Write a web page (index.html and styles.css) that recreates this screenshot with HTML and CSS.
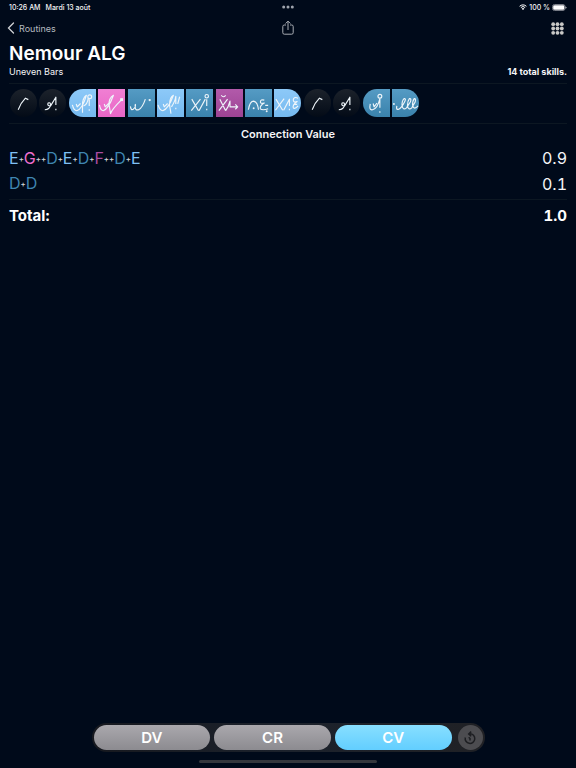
FILE: index.html
```html
<!DOCTYPE html>
<html lang="en">
<head>
    <meta charset="UTF-8">
    <meta name="viewport" content="width=device-width, initial-scale=1.0">
    <title>Nemour ALG</title>
    <link rel="stylesheet" href="styles.css">
</head>
<body>
    <div class="status-bar">
        <div class="status-left">
            <span>10:26 AM</span>
            <span>Mardi 13 août</span>
        </div>
        <svg class="dots" viewBox="0 0 12 4"><circle cx="1.7" cy="2" r="1.5"/><circle cx="6" cy="2" r="1.5"/><circle cx="10.3" cy="2" r="1.5"/></svg>
        <div class="status-right">
            <svg class="wifi" viewBox="0 0 16 12"><path d="M1.2 4.6a9.6 9.6 0 0 1 13.6 0M3.7 7.1a6.1 6.1 0 0 1 8.6 0"/><path class="fill" d="M8 12 5.3 9.3a3.8 3.8 0 0 1 5.4 0z"/></svg>
            <span>100 %</span>
            <svg class="battery" viewBox="0 0 15 7"><rect class="shell" x=".5" y=".5" width="12.5" height="6" rx="2"/><rect x="1.2" y="1.2" width="11.1" height="4.6" rx="1.3"/><path d="M13.6 2.4v2.2q.9-.3.9-1.1t-.9-1.1z"/></svg>
        </div>
    </div>

    <nav class="nav-bar">
        <a class="back" href="#">
            <svg viewBox="0 0 8 12"><path d="M6.5 1 1.5 6l5 5"/></svg>
            Routines
        </a>
        <button class="share" aria-label="Share">
            <svg viewBox="0 0 12 16"><path d="M4 5H2.3Q.8 5 .8 6.5v6.2q0 1.5 1.5 1.5h7.4q1.5 0 1.5-1.5V6.5Q11.2 5 9.7 5H8M6 10V1.2M3.6 3.5 6 1.1l2.4 2.4"/></svg>
        </button>
        <button class="grid-button" aria-label="Grid">
            <svg viewBox="0 0 13 13">
                <circle cx="2.2" cy="2.2" r="1.9"/><circle cx="6.5" cy="2.2" r="1.9"/><circle cx="10.8" cy="2.2" r="1.9"/>
                <circle cx="2.2" cy="6.5" r="1.9"/><circle cx="6.5" cy="6.5" r="1.9"/><circle cx="10.8" cy="6.5" r="1.9"/>
                <circle cx="2.2" cy="10.8" r="1.9"/><circle cx="6.5" cy="10.8" r="1.9"/><circle cx="10.8" cy="10.8" r="1.9"/>
            </svg>
        </button>
    </nav>

    <main>
        <h1>Nemour ALG</h1>
        <div class="subtitle">
            <span>Uneven Bars</span>
            <strong>14 total skills.</strong>
        </div>

        <div class="skills">
            <svg class="skill none" viewBox="0 0 28 28"><path d="M8.5 21Q11 14 16 9L19 10.5"/></svg>
            <svg class="skill none" viewBox="0 0 28 28"><path d="M6 21Q11 21 12 16Q12 13 9.5 14Q8 17 12 17L17.5 8V16M17.5 20v1.5"/></svg>
            <svg class="skill level-e start" viewBox="0 0 28 28"><path d="M3.5 16Q5 22 8 22Q14 20 18 6Q14 9 14 16L14 24M7.5 15L8.5 18L12 14.5M15 17Q19 16 20 9M21 10V17M21 20.5v1.5"/><circle cx="21.5" cy="7.5" r="2"/></svg>
            <svg class="skill level-g" viewBox="0 0 28 28"><path d="M1.5 16Q2.5 22 5.5 22Q11 20 16 6Q11 9 11.5 16L13 25Q14 21 24.5 10.5M6.5 15L7.5 18L11 14.5"/><rect class="dot" x="23" y="9" width="3" height="3"/></svg>
            <svg class="skill level-d" viewBox="0 0 28 28"><path d="M2.5 17.5Q3 22 5.5 20.5Q8.5 18 7.5 15M7.5 17Q7 22 11 21Q15 19 18 10"/><circle class="dot" cx="22.5" cy="11" r="1.2"/></svg>
            <svg class="skill level-e" viewBox="0 0 28 28"><path d="M1 16Q3 22 6 22Q12 20 17 6Q13 8 13 16L14.5 25M6.5 15L7.5 18L11 14.5M15 18Q19 12 19.5 7V15M19.5 19v1.5M23.5 7.5L21.5 15"/></svg>
            <svg class="skill level-d" viewBox="0 0 28 28"><path d="M6 10L13 22M15 10L5.5 22M13.5 22L20 10M21.5 10V17M21.5 20v1.5"/><circle cx="21.5" cy="7" r="1.8"/></svg>
            <svg class="skill level-f" viewBox="0 0 28 28"><path d="M4 10L10 22M12 10L3 22M5.5 6Q7.5 9 10 6M10 22Q13 18 14.5 12V18H22.5M20 15.5L22.5 18L20 20.5"/></svg>
            <svg class="skill level-d" viewBox="0 0 28 28"><path d="M3.5 21Q5 12 9 12Q13 13 14 21M20 11Q16 10 16 13Q16 15 20 14Q15 17 16 20Q18 22 24 20M21 16.5h3"/><circle class="dot" cx="9" cy="19.5" r="1"/><circle class="dot" cx="22.5" cy="22.5" r="1"/></svg>
            <svg class="skill level-e end" viewBox="0 0 28 28"><path d="M2 10L9 21.5M10.5 9.5L1.5 21.5M10 21.5L16 10V17M16 20v1.5M25 9Q20 7 20 11Q20 14 24 12.5Q19 16 20 19Q21 21 25 17M21 15.5h3"/></svg>
            <svg class="skill none" viewBox="0 0 28 28"><path d="M8.5 21Q11 14 16 9L19 10.5"/></svg>
            <svg class="skill none" viewBox="0 0 28 28"><path d="M6 21Q11 21 12 16Q12 13 9.5 14Q8 17 12 17L17.5 8V16M17.5 20v1.5"/></svg>
            <svg class="skill level-d start" viewBox="0 0 28 28"><path d="M7.5 15Q6 22 10 21Q15 20 17.5 9.5V19M17.5 22.5v1.5M10.5 14.5L11.5 18L14.5 14"/><circle cx="17.5" cy="7" r="2"/></svg>
            <svg class="skill level-d end" viewBox="0 0 28 28"><path d="M5 17Q4 21.5 7 20.5Q10 19 13 13Q15 9 12.5 9.5Q10 12 10.5 17Q11.5 22 15 19L19 13Q20.5 9 18 9.5Q16 12 16 17Q17 22 20.5 19L24 13Q25 9 23 9.5Q21 12 21.5 17Q23 21.5 27 17"/><circle class="dot" cx="2" cy="15" r="1"/></svg>
        </div>

        <h2>Connection Value</h2>
        <table class="connections">
            <tbody>
                <tr>
                    <td><span class="e">E</span><i>+</i><span class="g">G</span><i>++</i><span class="d">D</span><i>+</i><span class="e">E</span><i>+</i><span class="d">D</span><i>+</i><span class="f">F</span><i>++</i><span class="d">D</span><i>+</i><span class="e">E</span></td>
                    <td>0.9</td>
                </tr>
                <tr>
                    <td><span class="d">D</span><i>+</i><span class="d">D</span></td>
                    <td>0.1</td>
                </tr>
            </tbody>
            <tfoot>
                <tr>
                    <th scope="row">Total:</th>
                    <td>1.0</td>
                </tr>
            </tfoot>
        </table>
    </main>

    <footer>
        <div class="tabs">
            <button class="tab">DV</button>
            <button class="tab">CR</button>
            <button class="tab active">CV</button>
            <button class="reset" aria-label="Reset">
                <svg viewBox="0 0 14 14"><path d="M2.3 6.5A4.8 4.8 0 1 0 7 2.8M8.2.6 5.7 2.9 8.2 5.2M5.7 6.2 7 7.5V9.5"/></svg>
            </button>
        </div>
        <div class="home-indicator"></div>
    </footer>
</body>
</html>
```
FILE: styles.css
```css
* {
    box-sizing: border-box;
}

body {
    margin: 0;
    min-height: 100vh;
    display: flex;
    flex-direction: column;
    background: #000a1a;
    color: #f5f5f7;
    font-family: Inter, "Liberation Sans", sans-serif;
    font-size: 9px;
}

button {
    padding: 0;
    border: none;
    background: none;
    color: inherit;
    font-family: inherit;
    cursor: pointer;
}

svg {
    display: block;
}

/* Status bar */
.status-bar,
.nav-bar {
    display: grid;
    grid-template-columns: 1fr auto 1fr;
    align-items: center;
}

.status-bar {
    height: 14px;
    padding: 0 9px;
    font-size: 7px;
    font-weight: 500;
}

.status-left,
.status-right {
    display: flex;
    align-items: center;
}

.status-left {
    gap: 5px;
}

.status-right {
    justify-content: flex-end;
    gap: 2px;
}

.dots {
    width: 12px;
    height: 4px;
    fill: #a0a5ae;
}

.wifi {
    width: 8px;
    height: 6px;
    fill: none;
    stroke: #fff;
    stroke-width: 2;
}

.wifi .fill {
    fill: #fff;
    stroke: none;
}

.battery {
    width: 15px;
    height: 7px;
    fill: #fff;
}

.battery .shell {
    fill: none;
    stroke: #777c86;
}

/* Navigation */
.nav-bar {
    height: 28px;
    padding: 0 7px;
    color: #b6bac0;
}

.back {
    display: flex;
    align-items: center;
    gap: 4px;
    justify-self: start;
    color: inherit;
    text-decoration: none;
}

.back svg {
    width: 8px;
    height: 12px;
    fill: none;
    stroke: #d0d3d7;
    stroke-width: 1.3;
    stroke-linecap: round;
}

.share svg {
    width: 12px;
    height: 16px;
    fill: none;
    stroke: #a9adb4;
    stroke-width: 1;
}

.grid-button {
    justify-self: end;
    margin-right: 5px;
}

.grid-button svg {
    width: 13px;
    height: 13px;
    fill: #c9c9c7;
}

/* Content */
main {
    flex: 1;
    padding: 0 9px;
}

h1 {
    margin: 0;
    color: #fff;
    font-size: 19px;
    font-weight: 600;
    line-height: 24px;
}

.subtitle {
    display: flex;
    justify-content: space-between;
    padding-bottom: 5px;
    border-bottom: 1px solid #0c1722;
    line-height: 12px;
}

.subtitle strong {
    font-weight: 700;
}

.skills {
    display: grid;
    grid-template-columns: repeat(14, minmax(0, 27px));
    justify-content: space-between;
    max-width: 410px;
    padding: 5px 0 6px 1px;
}

.skill {
    width: 100%;
    height: 28px;
    fill: none;
    stroke: #eef5fa;
    stroke-width: 1.2;
    stroke-linejoin: round;
}

.skill .dot {
    fill: #eef5fa;
    stroke: none;
}

.none {
    border-radius: 14px;
    background: linear-gradient(#1c222b, #030b17);
}

.level-d {
    background: linear-gradient(#559bc4, #3a82ac);
}

.level-e {
    background: linear-gradient(#8dc9f8, #75b9ef);
}

.level-f {
    background: linear-gradient(#b25aaa, #9c4393);
}

.level-g {
    background: linear-gradient(#f07fd3, #e966c6);
}

.start {
    border-radius: 14px 0 0 14px;
}

.end {
    border-radius: 0 14px 14px 0;
}

h2 {
    margin: 0;
    padding-top: 3px;
    border-top: 1px solid #0c1722;
    font-size: 11px;
    font-weight: 600;
    line-height: 14px;
    text-align: center;
}

.connections {
    width: 100%;
    margin-top: 4px;
    border-collapse: collapse;
    font-size: 16px;
    font-variant-numeric: tabular-nums;
}

.connections td,
.connections th {
    height: 26px;
    padding: 0;
    line-height: 20px;
    text-align: left;
}

.connections tbody tr:last-child td {
    padding-bottom: 2px;
    height: 28px;
}

.connections td:first-child {
    font-weight: 400;
}

.connections td:last-child {
    text-align: right;
}

.connections tfoot tr {
    border-top: 1px solid #0c1722;
}

.connections tfoot th,
.connections tfoot td {
    height: 34px;
    color: #fff;
    font-size: 15px;
    font-weight: 700;
}

.connections i {
    color: #d5d8dc;
    font-size: 8px;
    font-style: normal;
    font-weight: 500;
    vertical-align: 2px;
}

.d {
    color: #3f86b1;
}

.e {
    color: #7fc1f5;
}

.f {
    color: #ab4ca1;
}

.g {
    color: #ee6fcd;
}

/* Bottom bar */
footer {
    display: flex;
    flex-direction: column;
    align-items: center;
    padding: 0 9px 5px;
}

.tabs {
    display: flex;
    align-items: center;
    gap: 4px;
    width: 100%;
    max-width: 393px;
    padding: 2px;
    border-radius: 15px;
    background: linear-gradient(90deg, #17191f, #1c222c 50%, #202125);
}

.tab {
    flex: 1;
    height: 25px;
    border-radius: 13px;
    background: linear-gradient(#aaa8ad, #8c8b90);
    color: #fff;
    font-size: 15px;
    font-weight: 600;
}

.tab.active {
    background: linear-gradient(#88dfff, #62ceff);
}

.reset {
    display: grid;
    place-items: center;
    width: 25px;
    height: 25px;
    margin-left: 2px;
    border-radius: 50%;
    background: #4c4c50;
}

.reset svg {
    width: 14px;
    height: 14px;
    fill: none;
    stroke: #1d1e22;
    stroke-width: 1.5;
}

.home-indicator {
    width: 178px;
    height: 3px;
    margin-top: 8px;
    border-radius: 2px;
    background: #35373d;
}
```
